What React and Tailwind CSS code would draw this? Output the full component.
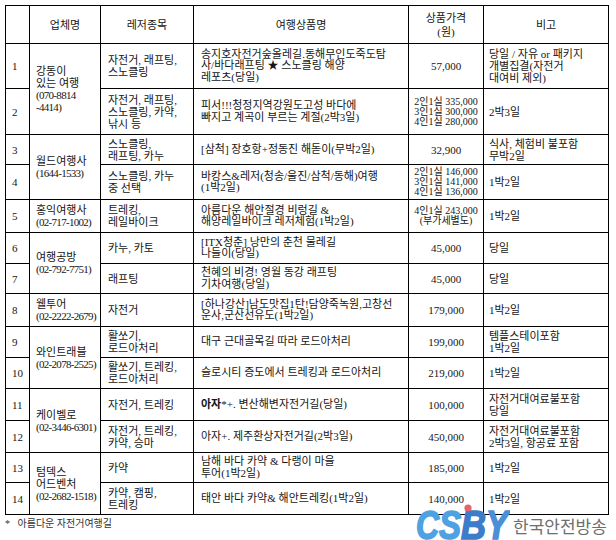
const rows = [
  {
    n: '1', h: 'h-[45px]',
    co: { span: 2, lines: ['강동이', '있는 여행', '(070-8814', '-4414)'] },
    lei: ['자전거, 래프팅,', '스노클링'],
    prod: ['송지호자전거숲올레길.동해무인도죽도탐', '사/바다래프팅 ★ 스노클링 해양', '레포츠(당일)'],
    price: ['57,000'],
    note: ['당일 / 자유 or 패키지', '개별집결(자전거', '대여비 제외)'],
  },
  {
    n: '2', h: 'h-[46px]',
    lei: ['자전거, 래프팅,', '스노클링, 카약,', '낚시 등'],
    prod: ['피서!!!청정지역강원도고성 바다에', '빠지고 계곡이 부르는 계절(2박3일)'],
    price: ['2인1실 335,000', '3인1실 300,000', '4인1실 280,000'],
    note: ['2박3일'],
  },
  {
    n: '3', h: 'h-[30px]',
    co: { span: 2, lines: ['월드여행사', '(1644-1533)'] },
    lei: ['스노클링,', '래프팅, 카누'],
    prod: ['[삼척] 장호항+정동진 해돋이(무박2일)'],
    price: ['32,900'],
    note: ['식사, 체험비 불포함', '무박2일'],
  },
  {
    n: '4', h: 'h-[35px]',
    lei: ['스노클링, 카누', '중 선택'],
    prod: ['바캉스&레저(청송/울진/삼척/동해)여행', '(1박2일)'],
    price: ['2인1실 146,000', '3인1실 141,000', '4인1실 136,000'],
    note: ['1박2일'],
  },
  {
    n: '5', h: 'h-[33px]',
    co: { span: 1, lines: ['홍익여행사', '(02-717-1002)'] },
    lei: ['트레킹,', '레일바이크'],
    prod: ['아름다운 해안절경 비렁길 &', '해양레일바이크 레저체험(1박2일)'],
    price: ['4인1실 243,000', '(부가세별도)'],
    note: ['1박2일'],
  },
  {
    n: '6', h: 'h-[31px]',
    co: { span: 2, lines: ['여행공방', '(02-792-7751)'] },
    lei: ['카누, 카토'],
    prod: ['[ITX청춘] 낭만의 춘천 물레길', '나들이(당일)'],
    price: ['45,000'],
    note: ['당일'],
  },
  {
    n: '7', h: 'h-[30px]',
    lei: ['래프팅'],
    prod: ['천혜의 비경! 영월 동강 래프팅', '기차여행(당일)'],
    price: ['45,000'],
    note: ['당일'],
  },
  {
    n: '8', h: 'h-[33px]',
    co: { span: 1, lines: ['웰투어', '(02-2222-2679)'] },
    lei: ['자전거'],
    prod: ['[하나강산]남도맛집1탄!담양죽녹원,고창선', '운사,군산선유도(1박2일)'],
    price: ['179,000'],
    note: ['1박2일'],
  },
  {
    n: '9', h: 'h-[31px]',
    co: { span: 2, lines: ['와인트래블', '(02-2078-2525)'] },
    lei: ['활쏘기,', '로드아처리'],
    prod: ['대구 근대골목길 따라 로드아처리'],
    price: ['199,000'],
    note: ['템플스테이포함', '1박2일'],
  },
  {
    n: '10', h: 'h-[31px]',
    lei: ['활쏘기, 트레킹,', '로드아처리'],
    prod: ['슬로시티 증도에서 트레킹과 로드아처리'],
    price: ['219,000'],
    note: ['1박2일'],
  },
  {
    n: '11', h: 'h-[32px]',
    co: { span: 2, lines: ['케이벨로', '(02-3446-6301)'] },
    lei: ['자전거, 트레킹'],
    prod: [
      <>
        <b className="font-bold">아자</b>*+. 변산해변자전거길(당일)
      </>,
    ],
    price: ['100,000'],
    note: ['자전거대여료불포함', '당일'],
  },
  {
    n: '12', h: 'h-[32px]',
    lei: ['자전거, 트레킹,', '카약, 승마'],
    prod: ['아자+. 제주환상자전거길(2박3일)'],
    price: ['450,000'],
    note: ['자전거대여료불포함', '2박3일, 항공료 포함'],
  },
  {
    n: '13', h: 'h-[30px]',
    co: { span: 2, lines: ['텀덱스', '어드벤처', '(02-2682-1518)'] },
    lei: ['카약'],
    prod: ['남해 바다 카약 & 다랭이 마을', '투어(1박2일)'],
    price: ['185,000'],
    note: ['1박2일'],
  },
  {
    n: '14', h: 'h-[32px]',
    lei: ['카약, 캠핑,', '트레킹'],
    prod: ['태안 바다 카약& 해안트레킹(1박2일)'],
    price: ['140,000'],
    note: ['1박2일'],
  },
];

function Lines({ items, phone }) {
  return items.map((t, i) => {
    const tight = phone && typeof t === 'string' && /^[(\-]/.test(t);
    return (
      <div key={i} className={tight ? 'whitespace-nowrap tracking-[-0.7px]' : 'whitespace-nowrap'}>
        {t}
      </div>
    );
  });
}

const cell = 'border border-black align-middle p-0';

// CSBY logo letters, each placed on its own
const logoLetters = [
  { ch: 'C', x: 2, w: 23, fill: '#4fa2e2' },
  { ch: 'S', x: 25, w: 22, fill: '#4fa2e2' },
  { ch: 'B', x: 47, w: 25, fill: '#3c7cc9' },
  { ch: 'Y', x: 72, w: 22, fill: '#4a8fd8' },
];

function Logo() {
  return (
    <svg className="absolute left-[414px] top-[503px]" width="96" height="37" viewBox="0 0 96 37">
      {logoLetters.map((l) => (
        <text
          key={l.ch}
          x={l.x}
          y="36"
          fontFamily="'Liberation Sans', Arial, sans-serif"
          fontWeight="900"
          fontStyle="italic"
          fontSize="40"
          textLength={l.w}
          lengthAdjust="spacingAndGlyphs"
          fill={l.fill}
          stroke={l.fill}
          strokeWidth="1.6"
        >
          {l.ch}
        </text>
      ))}
      <circle cx="54" cy="5" r="3.6" fill="#e2646c" />
    </svg>
  );
}

export default function App() {
  return (
    <div
      className="relative w-[616px] h-[540px] overflow-hidden bg-white text-[#151515] text-[11px] leading-[12px]"
      style={{ fontFamily: "'Liberation Serif', 'Noto Sans CJK KR', serif" }}
    >
      <div className="pt-[5px] pl-[5px]">
        <table className="table-fixed border-collapse w-[603px]">
          <colgroup>
            <col className="w-[24px]" />
            <col className="w-[71px]" />
            <col className="w-[93px]" />
            <col className="w-[215px]" />
            <col className="w-[75px]" />
            <col className="w-[125px]" />
          </colgroup>
          <thead>
            <tr className="h-[38px]">
              <th className={cell}></th>
              <th className={`${cell} font-normal text-center`}>업체명</th>
              <th className={`${cell} font-normal text-center`}>레저종목</th>
              <th className={`${cell} font-normal text-center`}>여행상품명</th>
              <th className={`${cell} font-normal text-center leading-[14px]`}>
                상품가격
                <br />
                (원)
              </th>
              <th className={`${cell} font-normal text-center`}>비고</th>
            </tr>
          </thead>
          <tbody>
            {rows.map((r) => (
              <tr key={r.n} className={r.h}>
                <td className={`${cell} pl-[6px]`}>{r.n}</td>
                {r.co && (
                  <td rowSpan={r.co.span} className={`${cell} pl-[6px]`}>
                    <Lines items={r.co.lines} phone />
                  </td>
                )}
                <td className={`${cell} pl-[7px] leading-[12px]`}>
                  <Lines items={r.lei} />
                </td>
                <td className={`${cell} pl-[7px] leading-[11.5px]`}>
                  <Lines items={r.prod} />
                </td>
                <td
                  className={`${cell} text-center ${
                    r.price.length > 1 ? 'text-[10px] leading-[10px]' : ''
                  }`}
                >
                  <Lines items={r.price} />
                </td>
                <td className={`${cell} pl-[5px] leading-[12px]`}>
                  <Lines items={r.note} />
                </td>
              </tr>
            ))}
          </tbody>
        </table>
      </div>
      <div className="pl-[5px] pt-[3px] text-[10px] text-[#333]">*&nbsp;&nbsp; 아름다운 자전거여행길</div>
      <Logo />
      <div
        className="absolute left-[513px] top-[514px] text-[17px] leading-[24px] text-[#6e6e6e]"
        style={{ fontFamily: "'Noto Sans CJK KR', sans-serif" }}
      >
        한국안전방송
      </div>
    </div>
  );
}
